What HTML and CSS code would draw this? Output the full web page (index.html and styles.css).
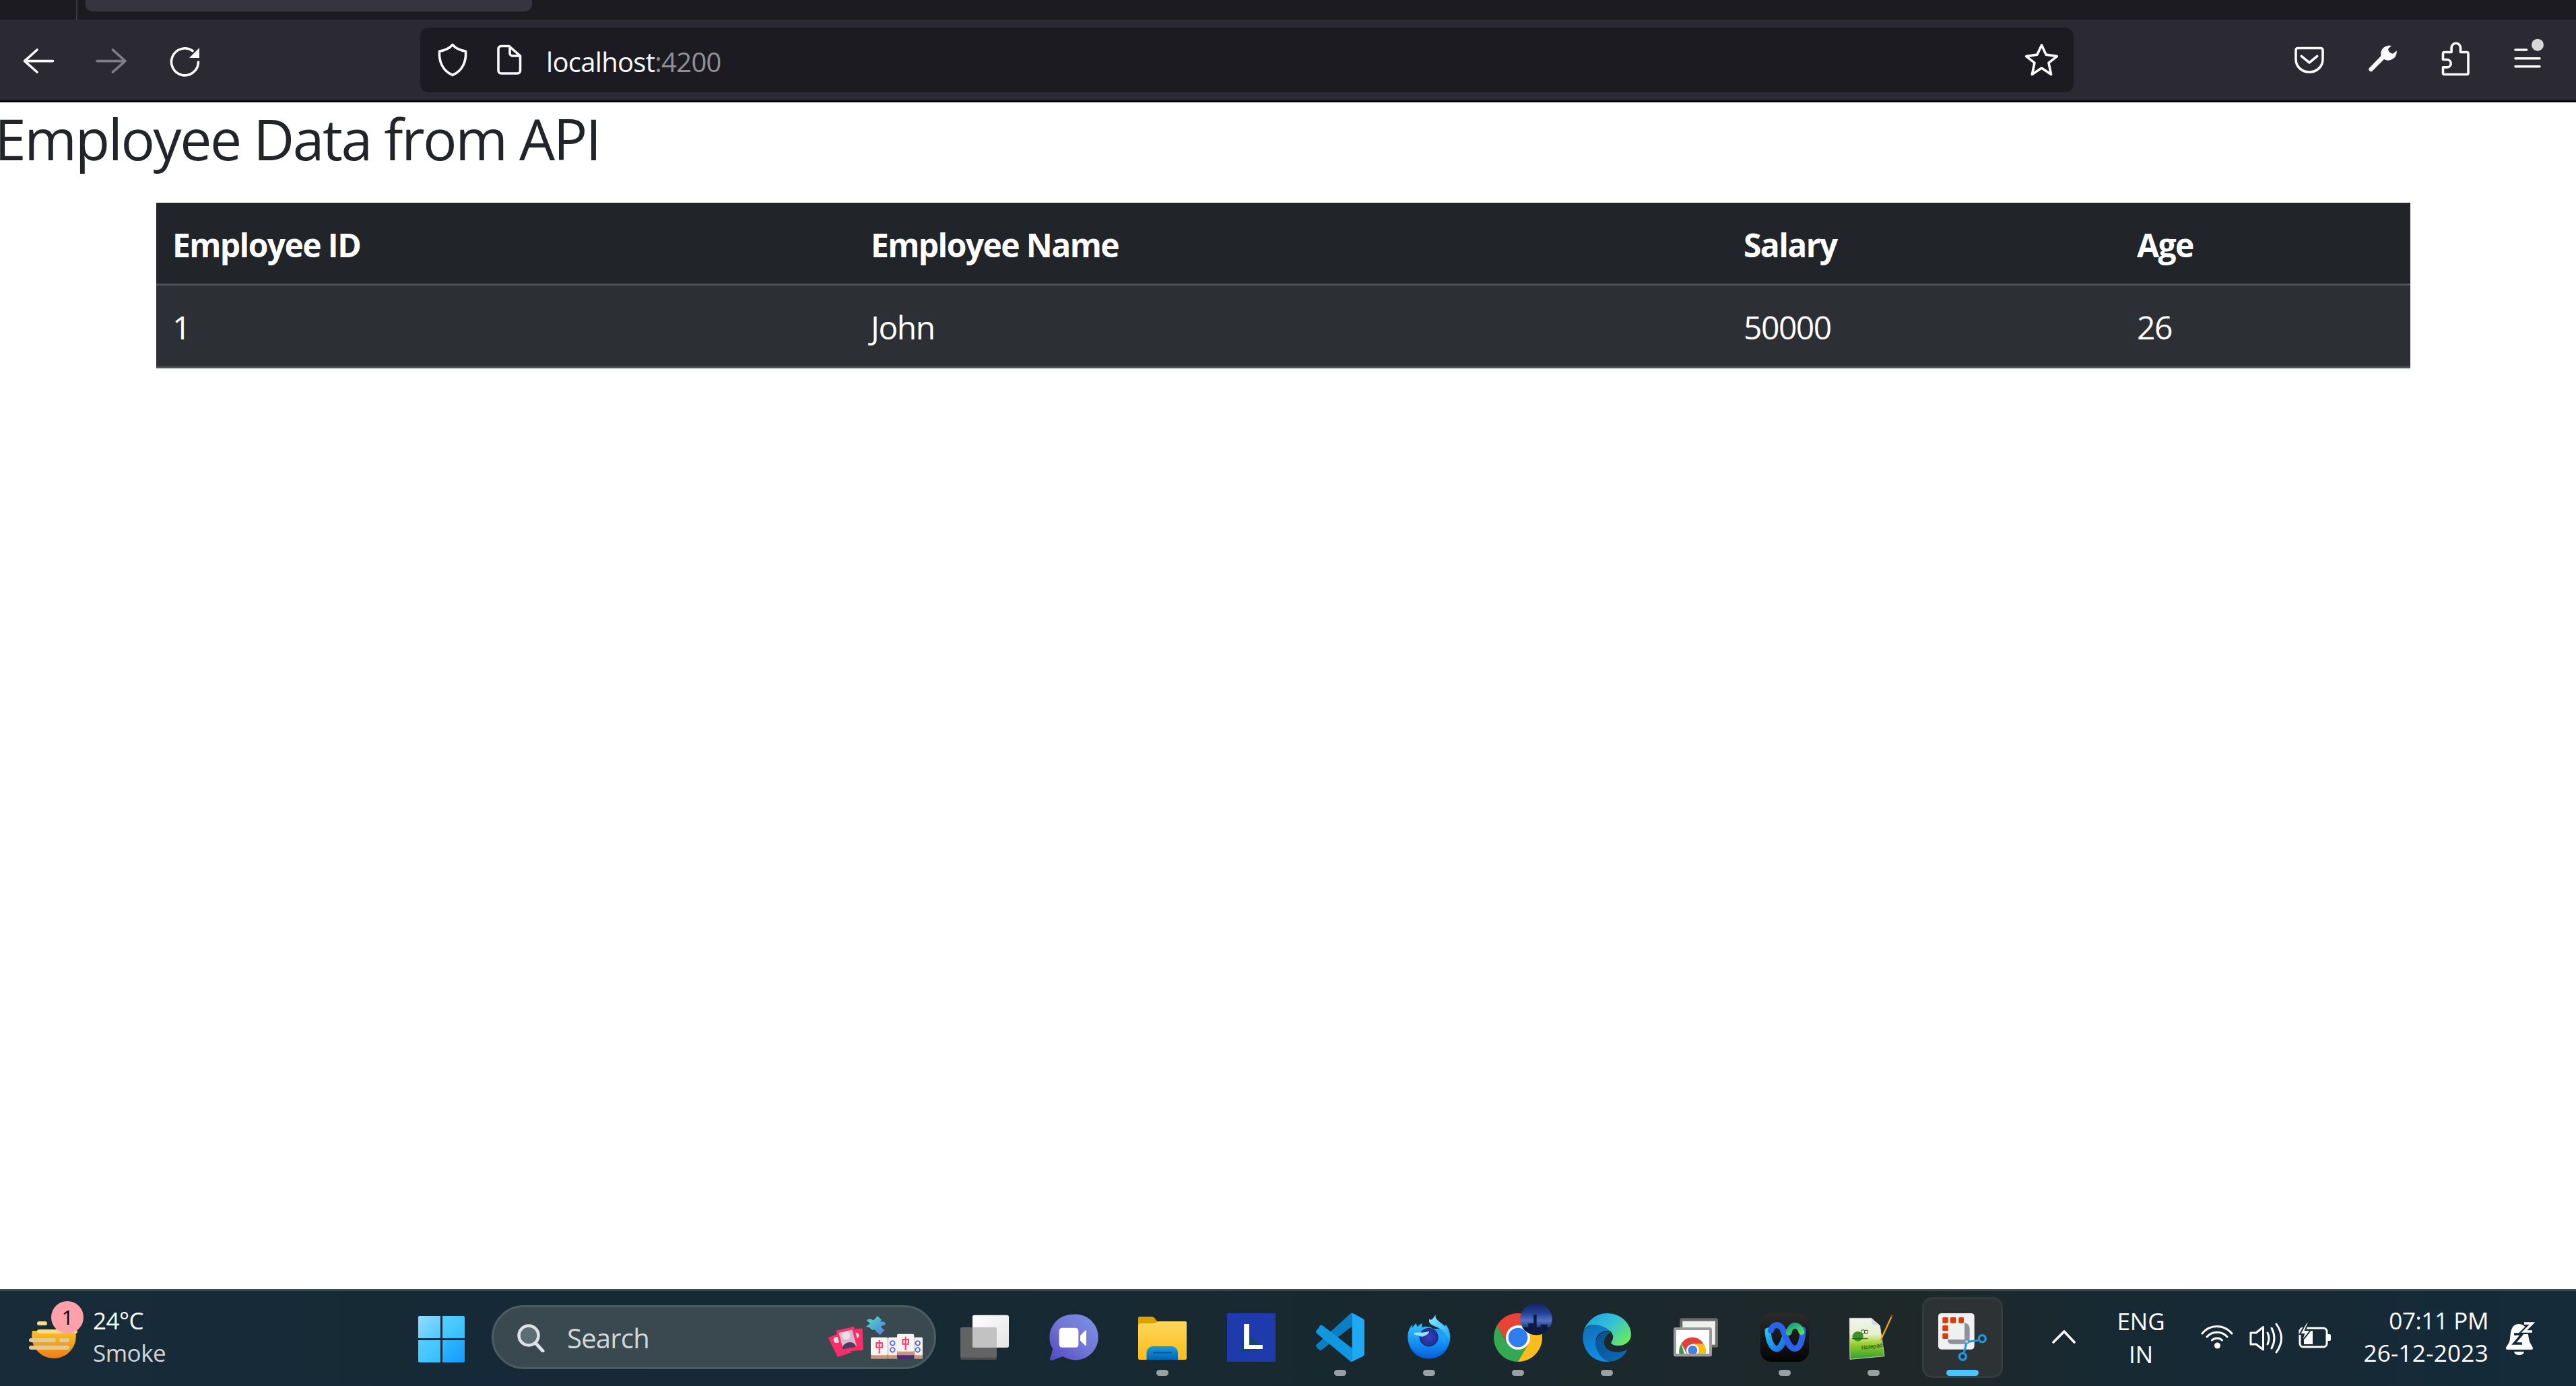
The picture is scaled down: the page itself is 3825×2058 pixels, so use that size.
FILE: index.html
```html
<!DOCTYPE html>
<html lang="en">
<head>
<meta charset="utf-8">
<title>Employee Data from API</title>
<link rel="stylesheet" href="styles.css">
</head>
<body>
<header class="browser">
  <div class="tabstrip"><span class="tab-divider"></span><span class="tab-active"></span></div>
  <nav class="toolbar">
    <span class="tool tool-first"><svg class="ic60" viewBox="0 0 60 60"><path class="ln" d="M9.5 31.6H51.5M28 15 9.5 31.6 28 48"/></svg></span>
    <span class="tool tool-dim"><svg class="ic60" viewBox="0 0 60 60"><path class="ln" d="M9 31.6H51M32.5 15 51 31.6 32.5 48"/></svg></span>
    <span class="tool"><svg class="ic60" viewBox="0 0 60 60"><path class="ln" d="M43 16.5A20 20 0 1 0 51.5 33"/><path class="fl" d="M53 12V27H38z"/></svg></span>
    <div class="urlbar">
      <svg class="ic60" viewBox="0 0 60 60"><path class="ln" d="M30 7.5C34 12 42 16 49.5 17 50.5 32 45 46 30 52.5 15 46 9.5 32 10.5 17 18 16 26 12 30 7.5z"/></svg>
      <svg class="ic60 url-page" viewBox="0 0 60 60"><path class="ln" d="M18 9.5H30L46.5 24V46a4 4 0 0 1-4 4H18a4 4 0 0 1-4-4V13.500a4 4 0 0 1 4-4zM31 10V20a4 4 0 0 0 4 4H46"/></svg>
      <span class="url-text">localhost<span class="url-dim">:4200</span></span>
      <svg class="ic60 url-star" viewBox="0 0 60 60"><path class="ln" d="M29.500 8 36 22.100 52.300 24.600 40 34.400 43.600 51.400 29.500 42 15.400 51.400 19 34.400 6.700 24.600 23 22.100z"/></svg>
    </div>
    <span class="tool tool-pocket"><svg class="ic60" viewBox="0 0 60 60"><path class="ln" d="M13 12.500H47a3 3 0 0 1 3 3V29C50 40 41 48 30 48S10 40 10 29V15.500a3 3 0 0 1 3-3z"/><path class="ln" d="M18.300 24.300 30 34 41.700 24.300"/></svg></span>
    <span class="tool"><svg class="ic60" viewBox="0 0 60 60"><path class="fl" d="M44 9A12.500 12.500 0 0 0 28.500 24L11 42A3.200 3.200 0 0 0 15.500 46.500L33 29A12.500 12.500 0 0 0 51.500 16L47.500 20A5 5 0 0 1 41.500 18.500 5 5 0 0 1 39.500 13z"/></svg></span>
    <span class="tool"><svg class="ic60" viewBox="0 0 60 60"><path class="ln" d="M14.500 51.500H48a2 2 0 0 0 2-2V20.500a2 2 0 0 0-2-2H38.500V12a6.700 6.700 0 0 0-13.400 0V18.500H14.500a2 2 0 0 0-2 2V29.500H18.500a5.700 5.700 0 0 1 0 11.400H12.500V49.500a2 2 0 0 0 2 2z"/></svg></span>
    <span class="tool"><svg class="ic60" viewBox="0 0 60 60"><path class="ln" d="M12 15H28.500M12 27.700H48M12 39.700H48"/><circle cx="45" cy="7.700" r="9" fill="#d6d6d6"/></svg></span>
  </nav>
</header>

<main class="page">
  <h3 class="title">Employee Data from API</h3>
  <table class="data">
    <colgroup><col class="c1"><col class="c2"><col class="c3"><col class="c4"></colgroup>
    <thead><tr><th>Employee ID</th><th>Employee Name</th><th>Salary</th><th>Age</th></tr></thead>
    <tbody><tr><td>1</td><td>John</td><td>50000</td><td>26</td></tr></tbody>
  </table>
</main>

<footer class="taskbar">
  <div class="weather">
    <svg class="weather-ic" viewBox="36 1928 90 92">
      <defs><linearGradient id="sun" x1="0" y1="0" x2="0" y2="1"><stop offset="0" stop-color="#f6c02f"/><stop offset="1" stop-color="#f07c17"/></linearGradient></defs>
      <path d="M48 1976A33 33 0 1 0 112 1976z" fill="url(#sun)"/>
      <g class="smoke-top"><rect x="55" y="1962" width="15" height="6" rx="3"/><rect x="55" y="1974" width="60" height="6" rx="3"/></g>
      <g class="smoke-low"><rect x="43" y="1987" width="40" height="6" rx="3"/><rect x="88" y="1987" width="15" height="6" rx="3"/><rect x="43" y="1998" width="60" height="6" rx="3"/></g>
    </svg>
    <span class="weather-badge">1</span>
  </div>
  <div class="weather-text"><div>24°C</div><div class="dim">Smoke</div></div>
  <svg class="start" viewBox="0 0 69 69">
    <defs>
      <linearGradient id="w1" x1="0" y1="0" x2="1" y2="1"><stop offset="0" stop-color="#92dcff"/><stop offset="1" stop-color="#4ec9ff"/></linearGradient>
      <linearGradient id="w2" x1="0" y1="0" x2="1" y2="1"><stop offset="0" stop-color="#54d0ff"/><stop offset="1" stop-color="#35bdff"/></linearGradient>
      <linearGradient id="w3" x1="0" y1="0" x2="1" y2="1"><stop offset="0" stop-color="#33baff"/><stop offset="1" stop-color="#129aff"/></linearGradient>
    </defs>
    <path fill="url(#w1)" d="M2 0H33V33H0V2a2 2 0 0 1 2-2z"/>
    <path fill="url(#w2)" d="M36 0H67a2 2 0 0 1 2 2V33H36z"/>
    <path fill="url(#w2)" d="M0 36H33V69H2a2 2 0 0 1-2-2z"/>
    <path fill="url(#w3)" d="M36 36H69V67a2 2 0 0 1-2 2H36z"/>
  </svg>
  <div class="search">
    <svg class="search-ic" viewBox="0 0 44 44"><circle cx="19" cy="19" r="14.500" class="search-lens"/><path class="search-handle" d="M29 30 40 42"/></svg>
    <span class="search-text">Search</span>
    <svg class="search-art" viewBox="60 60 432 198">
      <defs><linearGradient id="pz" x1="0" y1="0" x2="1" y2="1"><stop offset="0" stop-color="#5fe0b8"/><stop offset=".55" stop-color="#4fa8d8"/><stop offset="1" stop-color="#5b78e0"/></linearGradient></defs>
      <g class="card"><path d="M65 160 125 135 170 225 108 246z"/><path d="M150 125 218 118 221 215 165 220z"/></g>
      <circle class="card-head" cx="103" cy="170" r="14"/><circle class="card-head" cx="190" cy="150" r="13"/>
      <path class="card-front" d="M100 128 180 110 205 205 125 225z"/>
      <path class="card-art" d="M112 138 172 124 192 198 132 212z"/>
      <circle class="card-head" cx="145" cy="150" r="18"/>
      <path class="card-shadow" d="M127 205C135 180 172 170 186 192L189 200 132 212z"/>
      <path fill="url(#pz)" d="M285 63 303 80 297 90C305 86 318 88 320 97 320 105 312 108 306 105L300 112 316 127 296 148 278 131C276 123 268 121 262 127L248 113 233 112 252 96 238 84C240 76 252 74 262 80L268 82z"/>
      <g class="tile"><rect x="332" y="158" width="44" height="90" rx="5"/><rect x="448" y="158" width="38" height="90" rx="5"/></g>
      <g class="tile-edge"><rect x="332" y="238" width="44" height="16" rx="3"/><rect x="448" y="238" width="38" height="16" rx="3"/><rect x="255" y="236" width="76" height="18" rx="3"/></g>
      <rect class="tile-face" x="255" y="158" width="76" height="80" rx="6"/>
      <g class="tile-dots"><circle cx="352" cy="184" r="10"/><circle cx="352" cy="214" r="10"/><circle cx="464" cy="184" r="10"/><circle cx="464" cy="214" r="10"/></g>
      <rect class="tile-dark" x="372" y="222" width="76" height="32" rx="5"/>
      <rect class="tile-band" x="372" y="216" width="76" height="22" rx="5"/>
      <rect class="tile-face" x="372" y="143" width="76" height="78" rx="6"/>
      <path class="zhong" d="M280 183H306V203H280zM293 170V230M397 168H423V188H397zM410 155V215"/>
    </svg>
  </div>

  <div class="apps">
    <div class="app"><svg class="app-ic" viewBox="648 60 216 216">
      <defs><linearGradient id="tv" x1="0" y1="0" x2="1" y2="1"><stop offset="0" stop-color="#fff"/><stop offset="1" stop-color="#e4e4e4"/></linearGradient></defs>
      <rect x="648" y="122" width="162" height="145" rx="8" fill="#4c4c4c"/>
      <rect x="648" y="122" width="162" height="135" rx="8" fill="#636363"/>
      <rect x="702" y="68" width="162" height="145" rx="8" fill="url(#tv)"/>
      <path d="M710 122H802a8 8 0 0 1 8 8V213H710a8 8 0 0 1-8-8V122z" fill="#c2c2c2"/>
    </svg></div>
    <div class="app"><svg class="app-ic" viewBox="1044 60 216 216">
      <defs>
        <linearGradient id="tm2" x1="1" y1="0" x2="0" y2="1"><stop offset="0" stop-color="#7b93e6"/><stop offset=".5" stop-color="#7276d4"/><stop offset="1" stop-color="#5348c4"/></linearGradient>
      </defs>
      <path fill="url(#tm2)" d="M1148 65A102 102 0 1 1 1105 252L1056 270C1047 271 1046 264 1049 258L1060 220A102 102 0 0 1 1148 65z"/>
      <rect x="1088" y="125" width="86" height="87" rx="13" fill="#fff"/>
      <path d="M1182 160 1204 137C1206 134 1209 136 1209 140V200C1209 204 1206 206 1204 203L1182 182z" fill="#fff"/>
    </svg></div>
    <div class="app"><svg class="app-ic" viewBox="0 0 72 72">
      <defs>
        <linearGradient id="fd" x1="0" y1="0" x2="0" y2="1"><stop offset="0" stop-color="#ffd65c"/><stop offset="1" stop-color="#fbbd18"/></linearGradient>
        <linearGradient id="fb" x1="0" y1="0" x2="0" y2="1"><stop offset="0" stop-color="#1a9ce2"/><stop offset="1" stop-color="#0064b5"/></linearGradient>
      </defs>
      <path fill="#dca000" d="M2 5H20C24 5 25 8 28 12H70V30H0V7a2 2 0 0 1 2-2z"/>
      <path fill="url(#fd)" d="M0 18C0 16 2 15 4 15H20C24 15 27 14 30 12H70a2 2 0 0 1 2 2V67a2 2 0 0 1-2 2H2a2 2 0 0 1-2-2z"/>
      <path fill="url(#fb)" d="M12.500 59C12.500 53 17 49 22 49H49C55 49 59 53 59 59V69H12.500z"/>
      <rect x="22" y="57" width="28" height="2.500" fill="#0a589b"/>
    </svg><i class="dot"></i></div>
    <div class="app"><svg class="app-ic" viewBox="0 0 72 72">
      <rect width="72" height="72" fill="#1f3aad"/>
      <path d="M20 58 26 27 54.500 53.500z" fill="#12466f"/>
      <text class="logo-l" x="21.500" y="53">L</text>
    </svg></div>
    <div class="app"><svg class="app-ic" viewBox="39 60 216 216">
      <path fill="#0a7fc4" d="M200 60 200 118 66 222C60 226 55 225 52 222L42 212C38 208 38 203 42 199L190 64C193 61 197 60 200 60z"/>
      <path fill="#0f97df" d="M42 136 52 124C55 112 62 110 68 114L200 216V276C197 276 193 275 190 272L42 149C38 145 38 140 42 136z"/>
      <path fill="#1fa9f5" d="M195 60C198 59 202 60 205 61L248 84C252 86 255 90 255 95V241C255 246 252 250 248 252L205 273C201 275 196 276 192 274C197 273 200 270 200 264V72C200 66 198 62 195 60z"/>
    </svg><i class="dot"></i></div>
    <div class="app"><svg class="app-ic" viewBox="435 60 216 216">
      <defs>
        <linearGradient id="ffo" x1="0" y1="0" x2="0" y2="1"><stop offset="0" stop-color="#38c6ff"/><stop offset=".65" stop-color="#0f88ef"/><stop offset="1" stop-color="#0a5fd8"/></linearGradient>
        <linearGradient id="ffl" x1="0" y1="0" x2="1" y2="1"><stop offset="0" stop-color="#8feaff"/><stop offset="1" stop-color="#1ba6f5"/></linearGradient>
        <radialGradient id="ffg"><stop offset="0" stop-color="#3b3fc0"/><stop offset="1" stop-color="#1c2d8c"/></radialGradient>
      </defs>
      <path fill="url(#ffo)" d="M448 165C448 140 458 118 470 110L465 128C475 112 488 106 483 98L490 120 510 104 512 124C530 115 550 120 570 135 600 120 615 125 617 110 630 125 637 145 637 165 637 220 595 262 542 262 490 262 448 220 448 165z"/>
      <path fill="url(#ffl)" d="M572 66C568 85 585 95 605 110 625 125 636 150 632 185 628 165 615 140 590 128 565 115 535 110 545 85 552 95 560 85 572 66z"/>
      <path fill="#1ea0f2" d="M590 128C615 142 622 175 610 200 604 180 598 150 560 130z"/>
      <circle cx="542" cy="167" r="42" fill="url(#ffg)"/>
      <path fill="#8fe6fa" d="M472 148C490 142 520 150 540 140 548 140 540 152 528 158 520 165 505 166 498 160 488 158 478 158 472 148z"/>
      <path fill="#0a62d8" opacity=".6" d="M452 195C470 235 510 248 542 248 580 248 615 230 632 195 622 240 585 262 542 262 498 262 462 238 452 195z"/>
    </svg><i class="dot"></i></div>
    <div class="app"><svg class="app-ic app-over" viewBox="831 60 216 216">
      <defs>
        <linearGradient id="av" x1="0" y1="0" x2="0" y2="1"><stop offset="0" stop-color="#10265f"/><stop offset=".3" stop-color="#243f92"/><stop offset=".55" stop-color="#5273c8"/><stop offset=".75" stop-color="#2a3c78"/><stop offset="1" stop-color="#0b1437"/></linearGradient>
        <clipPath id="avc"><circle cx="1020" cy="86" r="71"/></clipPath>
      </defs>
      <path fill="#ea4335" d="M1032.500 114A108 108 0 0 0 845.500 114L892.200 195 939 114z"/>
      <path fill="#34a853" d="M845.500 114A108 108 0 0 0 939 276L985.800 195H892.200z"/>
      <path fill="#fbbc1c" d="M939 276A108 108 0 0 0 1032.500 114H939L985.800 195z"/>
      <circle cx="939" cy="168" r="54" fill="#fff"/>
      <circle cx="939" cy="168" r="43" fill="#2f7ef0"/>
      <circle cx="1020" cy="86" r="71" fill="url(#av)"/>
      <g clip-path="url(#avc)" fill="#0e1a44"><rect x="1008" y="66" width="14" height="80"/><rect x="948" y="122" width="144" height="40"/><rect x="985" y="105" width="25" height="25"/><rect x="1040" y="110" width="30" height="20"/></g>
    </svg><i class="dot"></i></div>
    <div class="app"><svg class="app-ic" viewBox="1227 60 216 216">
      <defs>
        <linearGradient id="e1" x1="0" y1="0" x2="1" y2=".7"><stop offset="0" stop-color="#1b9de2"/><stop offset=".55" stop-color="#35c1d8"/><stop offset="1" stop-color="#66e760"/></linearGradient>
        <linearGradient id="e2" x1="0" y1="0" x2=".3" y2="1"><stop offset="0" stop-color="#0f6fb8"/><stop offset="1" stop-color="#0f8de6"/></linearGradient>
        <linearGradient id="e3" x1="0" y1="0" x2="1" y2="1"><stop offset="0" stop-color="#0a4f8f"/><stop offset="1" stop-color="#0e6cb8"/></linearGradient>
      </defs>
      <path fill="url(#e2)" d="M1228 160C1232 125 1260 108 1290 110 1320 112 1345 125 1358 145 1340 130 1305 140 1290 165 1275 200 1295 250 1345 275 1340 276 1338 276 1335 276 1270 276 1225 225 1228 160z"/>
      <path fill="url(#e3)" d="M1330 142C1302 148 1285 172 1285 198 1287 235 1315 268 1345 275 1380 275 1410 255 1427 222 1400 235 1370 238 1345 225 1325 214 1318 195 1325 175 1330 160 1340 150 1352 146 1345 142 1338 141 1330 142z"/>
      <path fill="url(#e1)" d="M1228 156C1238 98 1285 60 1335 60 1400 60 1443 108 1443 155 1443 185 1415 205 1385 204 1365 204 1350 196 1355 188 1368 172 1365 150 1345 135 1320 115 1280 105 1255 115 1240 122 1232 138 1228 156z"/>
    </svg><i class="dot"></i></div>
    <div class="app"><svg class="app-ic" viewBox="63 105 216 216">
      <defs><clipPath id="rc"><rect x="84" y="180" width="147" height="105"/></clipPath></defs>
      <rect x="100" y="127" width="170" height="130" rx="9" fill="#6b6b6b"/>
      <rect x="112" y="140" width="146" height="105" fill="#efefef"/>
      <rect x="72" y="168" width="171" height="130" rx="9" fill="#9a9a9a"/>
      <rect x="84" y="180" width="147" height="105" fill="#fff"/>
      <g clip-path="url(#rc)">
        <path fill="#db4437" d="M205 240A57 57 0 0 0 107 240L132 290 157 240z"/>
        <path fill="#2f9e4f" d="M107 240A57 57 0 0 0 157 330H132z"/>
        <path fill="#f5bc1c" d="M205 240A57 57 0 0 1 214 290H180L157 240z"/>
        <circle cx="157" cy="270" r="28" fill="#fff"/>
        <circle cx="157" cy="270" r="21" fill="#3f83ea"/>
      </g>
    </svg></div>
    <div class="app"><svg class="app-ic" viewBox="459 105 216 216">
      <defs>
        <linearGradient id="wb" x1="0" y1="0" x2="0" y2="1"><stop offset="0" stop-color="#2b2b2b"/><stop offset="1" stop-color="#040404"/></linearGradient>
        <linearGradient id="wc" x1="0" y1="0" x2="1" y2="1"><stop offset="0" stop-color="#1fc3f0"/><stop offset="1" stop-color="#1f65e8"/></linearGradient>
        <linearGradient id="wg" x1="0" y1="0" x2="1" y2="1"><stop offset="0" stop-color="#1d9a88"/><stop offset="1" stop-color="#52dc5c"/></linearGradient>
      </defs>
      <rect x="459" y="105" width="216" height="216" rx="48" fill="url(#wb)"/>
      <path class="wbx" stroke="url(#wc)" d="M492 182C494 240 520 272 538 262 560 250 565 215 575 190"/>
      <path class="wbx" stroke="#2a62ea" d="M505 182C515 148 550 150 562 185 575 225 590 265 615 262 640 258 648 210 648 178"/>
      <path class="wbx" stroke="url(#wg)" d="M585 190C595 150 630 150 642 188"/>
    </svg><i class="dot"></i></div>
    <div class="app"><svg class="app-ic" viewBox="867 105 216 216">
      <defs>
        <linearGradient id="np" x1="0" y1="0" x2="0" y2="1"><stop offset="0" stop-color="#f2f2f2"/><stop offset=".4" stop-color="#e6f0c8"/><stop offset=".62" stop-color="#9bd02f"/><stop offset="1" stop-color="#2f9e2a"/></linearGradient>
      </defs>
      <path fill="url(#np)" stroke="#cfcfcf" stroke-width="3" d="M868 127H965L1003 160 1023 296 870 310z"/>
      <path fill="#d9d9d9" d="M965 127 970 155 1003 160z"/>
      <ellipse cx="905" cy="208" rx="24" ry="22" fill="#3d8f2a"/>
      <circle cx="928" cy="188" r="9" fill="#e8f2d8" stroke="#1d3f14" stroke-width="3"/>
      <circle cx="942" cy="188" r="8" fill="#e8f2d8" stroke="#1d3f14" stroke-width="3"/>
      <path d="M878 218H950" stroke="#5a3a1a" stroke-width="3"/>
      <text class="npp" transform="translate(922 268) rotate(-8)">Notepad++</text>
      <path d="M1005 228 1056 118" stroke="#eea312" stroke-width="7"/>
      <path d="M1054 122 1058 112" stroke="#a8332c" stroke-width="8"/>
    </svg><i class="dot"></i></div>
    <div class="app app-active"><svg class="app-ic" viewBox="1251 105 216 216">
      <rect x="1251" y="105" width="161" height="161" rx="14" fill="#eef0f1"/>
      <g fill="#d83b01">
        <rect x="1270" y="123" width="25" height="26" rx="4"/><rect x="1305" y="123" width="25" height="26" rx="4"/><rect x="1342" y="123" width="23" height="26" rx="4"/>
        <rect x="1270" y="159" width="25" height="25" rx="4"/><rect x="1270" y="194" width="25" height="25" rx="4"/>
      </g>
      <path fill="#8d9298" d="M1365 148C1380 148 1391 158 1391 173V232C1391 238 1386 242 1380 242H1310C1298 242 1293 232 1293 222H1368V150z"/>
      <path d="M1385 232 1428 226M1377 236 1366 280" stroke="#1a9ae6" stroke-width="9"/>
      <circle cx="1447" cy="218" r="15" class="snip-ring"/>
      <circle cx="1360" cy="298" r="15" class="snip-ring"/>
      <circle cx="1377" cy="231" r="6" fill="#c6cbcf"/>
    </svg><i class="dot dot-active"></i></div>
  </div>

  <svg class="ic60 tray-chevron" viewBox="0 0 60 60"><path class="ln" d="M14 38 30 22 45 38"/></svg>
  <div class="lang"><div>ENG</div><div>IN</div></div>
  <svg class="ic60 tray-wifi" viewBox="0 0 60 60"><path class="ln-thin" d="M8 25A28.500 28.500 0 0 1 52 25M15 30A20 20 0 0 1 45 30M22.500 35A11 11 0 0 1 37.500 35"/><circle cx="30.500" cy="43" r="4.500" fill="#fff"/></svg>
  <svg class="ic60 tray-sound" viewBox="0 0 60 60"><path class="ln-thin" d="M7 24H15L25.500 15.500V49L15 41H7zM32 24Q36 32 32 41M38 17Q46 32 38 47M45 11Q60 32 45 53"/></svg>
  <svg class="ic60 tray-batt" viewBox="0 0 60 60"><rect x="8" y="17" width="40" height="28" rx="5" class="ln-thin"/><rect x="48" y="26" width="6" height="10" rx="2" fill="#fff"/><path d="M14 41V28L20 21H27V41z" fill="#fff"/><path d="M18 8 8 26H14L10 38 24 20H16L21 8z" fill="#fff" stroke="#152a35" stroke-width="2"/></svg>
  <div class="clock"><div class="clock-time">07:11 PM</div><div class="clock-date">26-12-2023</div></div>
  <svg class="ic60 tray-bell" viewBox="0 0 60 60">
    <path fill="#fff" d="M29 11C18 11 17 22 16 33 15.500 40 10 44 10 47 10 48 11 49 12 49H48C49 49 50 48 50 47 50 44 45 40 44 33 43 22 40 11 29 11z"/>
    <path fill="#fff" d="M22 52H37C36 56 33 57 29.500 57 26 57 23 56 22 52z"/>
    <path d="M22 26H34L22 40H34" fill="none" stroke="#152a35" stroke-width="3.500"/>
    <path d="M37 10H49L37 22H49" fill="none" stroke="#152a35" stroke-width="8"/>
    <path d="M37 10H49L37 22H49" fill="none" stroke="#fff" stroke-width="3.500"/>
  </svg>
</footer>
</body>
</html>
```
FILE: styles.css
```css
* { box-sizing: border-box; }
html, body { margin: 0; padding: 0; height: 100%; }
body {
  display: flex;
  flex-direction: column;
  height: 2058px;
  overflow: hidden;
  background: #fff;
  color: #212529;
  font-family: "Open Sans", "Noto Sans", sans-serif;
}

/* browser chrome */
.tabstrip { display: flex; height: 29px; background: #1c1b22; }
.tab-divider { width: 2px; height: 29px; margin-left: 113px; background: #3b3a42; }
.tab-active { width: 663px; height: 17px; margin-left: 12px; background: #36343e; border-radius: 0 0 10px 10px; }
.toolbar {
  display: flex;
  align-items: flex-start;
  height: 123px;
  background: #2b2a33;
  border-bottom: 3px solid #000;
}
.ic60 { display: block; width: 60px; height: 60px; flex: none; overflow: visible; }
.ln { fill: none; stroke: #fbfbfe; stroke-width: 3.6; stroke-linecap: round; stroke-linejoin: round; }
.ln-thin { fill: none; stroke: #fff; stroke-width: 3; stroke-linecap: round; stroke-linejoin: round; }
.fl { fill: #fbfbfe; }
.tool { display: flex; justify-content: center; width: 108px; padding-top: 30px; flex: none; }
.tool-first { margin-left: 3px; }
.tool-dim { opacity: .4; }
.urlbar {
  display: flex;
  align-items: center;
  width: 2455px;
  height: 96px;
  margin-top: 12px;
  margin-left: 297px;
  padding: 0 17px 0 18px;
  background: #1c1b22;
  border-radius: 12px;
}
.tool-pocket { margin-left: 296px; }
.url-page { margin-left: 24px; }
.url-text { margin: 5px 0 0 25px; font-size: 40px; letter-spacing: -.7px; color: #fbfbfe; white-space: nowrap; }
.url-dim { color: #8f8f94; }
.url-star { margin-left: auto; }

/* page */
.page { flex: 1; min-height: 0; overflow: hidden; }
.title {
  margin: 3px 0 45px -8px;
  font-size: 84px;
  line-height: 101px;
  font-weight: 400;
  letter-spacing: -2.4px;
  white-space: nowrap;
}
.data {
  width: 3347px;
  margin-left: 232px;
  border-collapse: separate;
  border-spacing: 0;
  table-layout: fixed;
  color: #fff;
  font-size: 48px;
  line-height: 72px;
}
.c1 { width: 1037px; }
.c2 { width: 1296px; }
.c3 { width: 584px; }
.c4 { width: 430px; }
.data th, .data td { text-align: left; border-bottom: 3px solid #4d5154; }
.data th { padding: 27px 24px 21px; background: #212529; font-weight: 700; letter-spacing: -1.6px; }
.data td { padding: 26px 24px 22px; background: #2c3034; font-weight: 400; letter-spacing: -1.5px; }

/* taskbar */
.taskbar {
  display: flex;
  align-items: flex-start;
  flex: none;
  height: 144px;
  color: #fff;
  font-size: 35px;
  letter-spacing: -.5px;
  line-height: 48px;
  border-top: 3px solid #3a4a50;
  background: linear-gradient(90deg, #172b38 0%, #152a35 30%, #18282f 52%, #1f2829 75%, #172933 82%, #152b39 100%);
}
.weather { position: relative; width: 90px; height: 92px; margin: 11px 0 0 36px; flex: none; }
.weather-ic { display: block; width: 90px; height: 92px; }
.smoke-top { fill: #f6dc8c; }
.smoke-low { fill: #e2cb90; }
.weather-badge {
  position: absolute;
  left: 40px;
  top: 4px;
  width: 48px;
  height: 48px;
  border-radius: 50%;
  background: #ffa0ab;
  color: #000;
  font-size: 30px;
  line-height: 48px;
  text-align: center;
}
.weather-text { width: 120px; margin: 20px 0 0 12px; flex: none; white-space: nowrap; }
.dim { color: #d2d5d7; }
.start { display: block; width: 69px; height: 69px; margin: 37px 0 0 363px; flex: none; }
.search {
  display: flex;
  align-items: center;
  width: 660px;
  height: 95px;
  margin: 21px 0 0 40px;
  padding: 0 15px 0 33px;
  flex: none;
  background: #39494f;
  border: 3px solid #4b5c63;
  border-radius: 48px;
}
.search-ic { display: block; width: 44px; height: 44px; flex: none; }
.search-lens { fill: #5c6d74; stroke: #dfe3e5; stroke-width: 4.500; }
.search-handle { fill: none; stroke: #dfe3e5; stroke-width: 5; stroke-linecap: round; }
.search-text { margin: 2px 0 0 32px; color: #d3d7d9; font-size: 40px; letter-spacing: -.8px; }
.search-art { display: block; width: 144px; height: 66px; margin-left: auto; flex: none; }
.card path { fill: #ff2c6a; }
.card-front { fill: #ff2c6a; }
.card-art { fill: #d9b8c8; }
.card-shadow { fill: #4a3c62; }
.card-head { fill: #e9e0e6; }
.tile rect { fill: #f3f1ef; }
.tile-edge rect { fill: #c99477; }
.tile-face { fill: #f7f5f3; }
.tile-dark { fill: #4a2c78; }
.tile-band { fill: #c99477; }
.tile-dots circle { fill: none; stroke: #4a5ad0; stroke-width: 5; }
.zhong { fill: none; stroke: #ff3b6b; stroke-width: 6; }

.apps { display: flex; margin-left: 6px; flex: none; }
.app {
  display: flex;
  flex-direction: column;
  align-items: center;
  width: 120px;
  height: 120px;
  margin: 9px 6px 0;
  padding-top: 24px;
  flex: none;
  border-radius: 15px;
}
.app-ic { display: block; width: 72px; height: 72px; flex: none; overflow: visible; }
.dot { display: block; width: 18px; height: 9px; margin-top: 12px; border-radius: 5px; background: #9aa1a4; }
.app-active { background: #2d3335; border: 3px solid #353b3d; padding-top: 21px; }
.dot-active { width: 48px; background: #4cc2ff; }
.logo-l { font-family: "Liberation Sans", sans-serif; font-weight: 700; font-size: 54px; fill: #fff; }
.wbx { fill: none; stroke-width: 27; stroke-linecap: round; }
.npp { font-family: "Liberation Sans", sans-serif; font-size: 26px; fill: #1d3f14; }
.snip-ring { fill: none; stroke: #1a9ae6; stroke-width: 10; }

.tray-chevron { margin: 38px 0 0 55px; }
.lang { width: 120px; margin: 20px 0 0 24px; text-align: center; flex: none; letter-spacing: 0; line-height: 49px; }
.tray-wifi { margin: 38px 0 0 23px; }
.tray-sound { margin: 38px 0 0 13px; }
.tray-batt { margin: 38px 0 0 12px; }
.clock { width: 228px; margin: 20px 0 0; text-align: right; flex: none; white-space: nowrap; }
.clock-time { letter-spacing: -.4px; }
.clock-date { letter-spacing: .3px; }
.tray-bell { margin: 38px 0 0 16px; }
```
